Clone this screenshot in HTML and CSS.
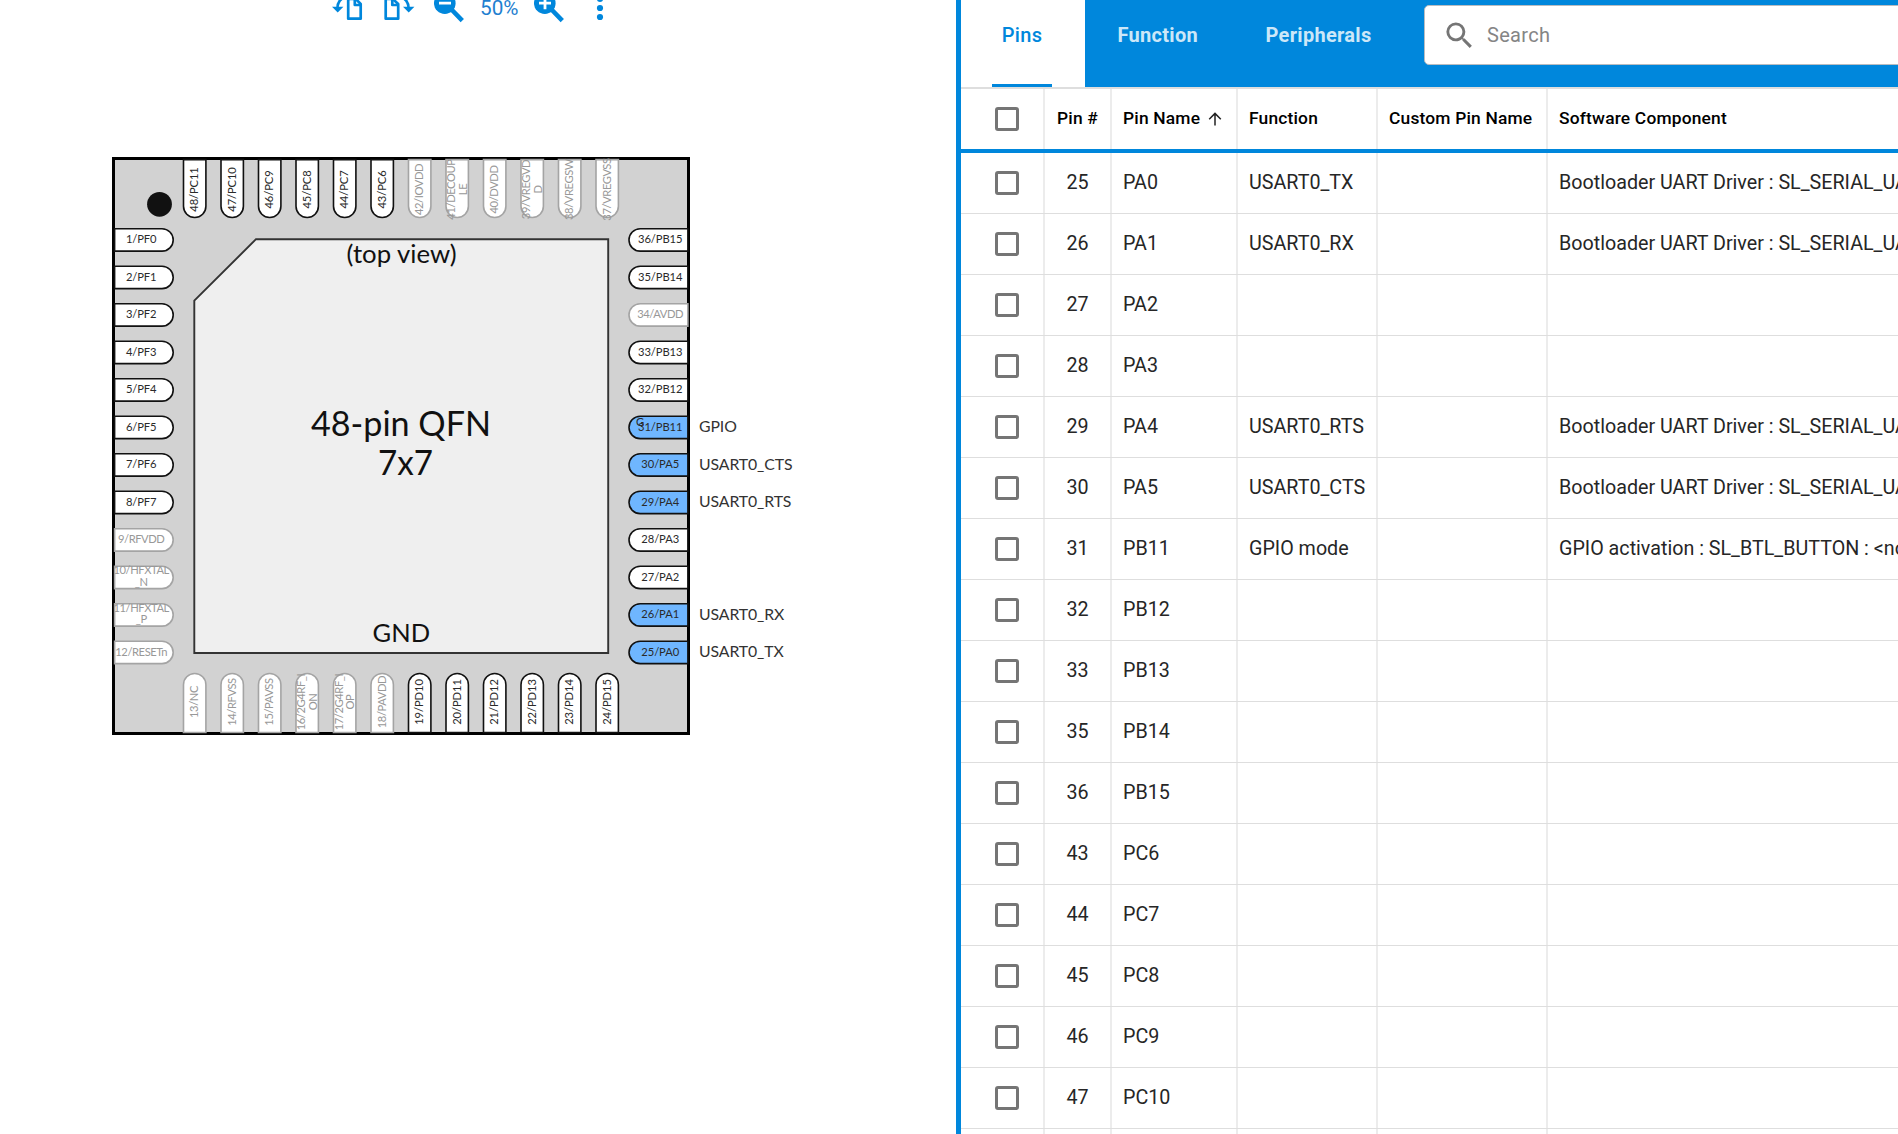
FILE: index.html
```html
<!DOCTYPE html>
<html lang="en">
<head>
<meta charset="utf-8">
<title>Pin Tool</title>
<link rel="stylesheet" href="styles.css">
</head>
<body>
<main class="app">
  <section class="canvas-pane">
    <div class="toolbar">
      <svg class="tool-icons" width="640" height="40" viewBox="0 0 640 40">
        <g class="tool-line">
          <path d="M349.2 -1H355.8L360.7 4V18.7H348.2V0"/>
          <path d="M354.8 -1V5H360.7"/>
          <path d="M337.5 8C337.5 3 340 -1 345 -3"/>
          <path d="M386.2 -1H392.8L398.2 4V18.7H385.7V0"/>
          <path d="M392.3 -1V5H398.2"/>
          <path d="M408.5 8C408.5 3 406 -1 401 -3"/>
        </g>
        <path class="tool-fill" d="M332 6.8H343.4L337.7 12.6ZM403 6.8H414.4L408.7 12.6Z"/>
        <g class="tool-fill">
          <circle cx="444.8" cy="3.2" r="10.8"/><circle cx="544.8" cy="3.2" r="10.8"/>
          <circle cx="600" cy="-1" r="3.1"/><circle cx="600" cy="8" r="3.1"/><circle cx="600" cy="17" r="3.1"/>
        </g>
        <path class="tool-handle" d="M451.5 9.5L462.3 20.6M551.5 9.5L562.3 20.6"/>
        <path class="tool-sign" d="M439 3.2H451M539 3.2H551M545 -3V9.2"/>
        <text class="zoom-level" x="480" y="14.5" textLength="38.5" lengthAdjust="spacingAndGlyphs">50%</text>
      </svg>
    </div>
    <svg class="chip" width="956" height="1094" viewBox="0 40 956 1094">
      <rect class="chip-body" x="113.5" y="158.5" width="575" height="575"/>
      <circle class="chip-dot" cx="159.5" cy="204.3" r="12.4"/>
      <path class="chip-pad" d="M194.3 300.7L256 239.2H608.2V653H194.3Z"/>
      <text class="chip-note" x="401.5" y="262.5" textLength="110" lengthAdjust="spacingAndGlyphs">(top view)</text>
      <text class="chip-title" x="401" y="435.5" textLength="180" lengthAdjust="spacingAndGlyphs">48-pin QFN</text>
      <text class="chip-title" x="405.5" y="474.5" textLength="55" lengthAdjust="spacingAndGlyphs">7x7</text>
      <text class="chip-note" x="401.3" y="641.5" textLength="57.5" lengthAdjust="spacingAndGlyphs">GND</text>
      <g id="pins"></g>
    </svg>
  </section>
  <section class="table-pane">
    <nav class="tabs">
      <div class="tab tab-active"><span>Pins</span></div>
      <div class="tab tab-function">Function</div>
      <div class="tab tab-peripherals">Peripherals</div>
      <div class="search">
        <svg width="35" height="35" viewBox="0 0 24 24"><path d="M15.5 14h-.79l-.28-.27A6.47 6.47 0 0 0 16 9.5 6.5 6.5 0 1 0 9.5 16c1.61 0 3.09-.59 4.23-1.57l.27.28v.79l5 4.99L20.49 19l-4.99-5zm-6 0C7.01 14 5 11.99 5 9.5S7.01 5 9.5 5 14 7.01 14 9.5 11.99 14 9.5 14z"/></svg>
        <span>Search</span>
      </div>
    </nav>
    <div class="row head">
      <div class="cell check"><i></i></div>
      <div class="cell num">Pin #</div>
      <div class="cell">Pin Name<svg class="sort" width="14" height="14" viewBox="0 0 14 14"><path d="M7 13.4V1.4M1.2 7.2L7 1.4L12.8 7.2"/></svg></div>
      <div class="cell">Function</div>
      <div class="cell">Custom Pin Name</div>
      <div class="cell">Software Component</div>
    </div>
    <div id="rows"></div>
  </section>
</main>
<script src="app.js"></script>
</body>
</html>
```
FILE: styles.css
```css
* { box-sizing: border-box; }
body {
  margin: 0;
  height: 1134px;
  overflow: hidden;
  background: #fff;
  font-family: Roboto, "Liberation Sans", sans-serif;
}
.app { display: flex; height: 1134px; }
.canvas-pane { width: 956px; flex: none; display: flex; flex-direction: column; }
.toolbar { height: 40px; }
.toolbar svg, .chip { display: block; }

.tool-line { fill: none; stroke: #0087dc; stroke-width: 2.7; stroke-linejoin: round; }
.tool-fill { fill: #0087dc; }
.tool-handle { stroke: #0087dc; stroke-width: 4.6; }
.tool-sign { stroke: #fff; stroke-width: 2.8; }
.zoom-level { font-size: 20px; fill: #1f7fd0; }

.chip { font-family: Lato, "Noto Sans", sans-serif; text-anchor: middle; }
.chip-body { fill: #d2d2d2; stroke: #000; stroke-width: 3; }
.chip-dot { fill: #111; }
.chip-pad { fill: #efefef; stroke: #333; stroke-width: 1.9; }
.chip-note { font-size: 25px; fill: #111; }
.chip-title { font-size: 34px; fill: #111; }
.pin path { fill: #fff; stroke: #111; stroke-width: 1.6; }
.pin text { font-size: 11.2px; letter-spacing: -.1px; fill: #2a2a2a; }
.pin.fixed path { stroke: #a4a4a4; }
.pin.fixed text { fill: #989898; letter-spacing: -.42px; }
.pin.used path { fill: #6fb6ff; }
.signal { font-size: 15.8px; letter-spacing: -.1px; fill: #333; text-anchor: start; }

.table-pane { flex: 1; min-width: 0; border-left: 5px solid #0087dc; overflow: hidden; }
.tabs {
  display: flex;
  height: 89px;
  background: #0087dc;
  border-bottom: 2px solid #dedede;
  font-size: 20px;
  font-weight: 700;
  letter-spacing: .3px;
  color: #cce7f8;
}
.tab { flex: none; height: 70px; line-height: 70px; white-space: nowrap; }
.tab-active { width: 124px; height: 87px; padding: 0 32px 0 31px; background: #fff; color: #0087dc; font-weight: 500; }
.tab-active span { display: block; width: 60px; height: 87px; border-bottom: 3px solid #0087dc; text-align: center; }
.tab-function { margin-left: 32.5px; width: 148px; }
.tab-peripherals { width: 158.5px; }
.search {
  display: flex;
  align-items: center;
  flex: none;
  width: 560px;
  height: 60px;
  margin-top: 5px;
  padding-left: 17px;
  background: #fff;
  border: 1px solid #b9bcc0;
  border-radius: 5px;
  font-size: 20px;
  font-weight: 400;
  color: #858585;
}
.search svg { fill: #757575; }
.search span { margin-left: 10px; }

.row {
  display: grid;
  grid-template-columns: 84px 67px 126px 140px 170px 350px;
  height: 61px;
  border-bottom: 1px solid #dedede;
  font-size: 19.7px;
  color: #262626;
}
.cell {
  display: flex;
  align-items: center;
  padding: 0 0 1px 11px;
  border-right: 2px solid #ececec;
  white-space: nowrap;
  overflow: hidden;
}
.cell:last-child { border-right: 0; }
.num { padding-left: 0; justify-content: center; }
.check { padding: 0 0 0 34px; }
.check i { width: 24px; height: 24px; border: 3px solid #757575; border-radius: 3px; }
.head { height: 64px; border-bottom: 4px solid #0087dc; font-size: 17.4px; letter-spacing: .18px; font-weight: 500; color: #000; }
.head .cell:not(.check) { padding-bottom: 2px; }
.sort { margin: 2px 0 0 8px; fill: none; stroke: #222; stroke-width: 1.5; }
```
FILE: app.js
```js
const left = ["1/PF0", "2/PF1", "3/PF2", "4/PF3", "5/PF4", "6/PF5", "7/PF6", "8/PF7", "9/RFVDD", "10/HFXTAL|_N", "11/HFXTAL|_P", "12/RESETn"];
const bottom = ["13/NC", "14/RFVSS", "15/PAVSS", "16/2G4RF_I|ON", "17/2G4RF_I|OP", "18/PAVDD", "19/PD10", "20/PD11", "21/PD12", "22/PD13", "23/PD14", "24/PD15"];
const right = ["36/PB15", "35/PB14", "34/AVDD", "33/PB13", "32/PB12", "31/PB11", "30/PA5", "29/PA4", "28/PA3", "27/PA2", "26/PA1", "25/PA0"];
const topPins = ["48/PC11", "47/PC10", "46/PC9", "45/PC8", "44/PC7", "43/PC6", "42/IOVDD", "41/DECOUP|LE", "40/DVDD", "39/VREGVD|D", "38/VREGSW", "37/VREGVSS"];
const signals = { "31": "GPIO", "30": "USART0_CTS", "29": "USART0_RTS", "26": "USART0_RX", "25": "USART0_TX" };
const PITCH = 37.5;
const R = 11.2;

function label(text, cx, cy, rotated) {
  const lines = text.split("|");
  const offsets = lines.length === 1 ? [3.6] : rotated ? [-2, 9.6] : [-3, 8.6];
  return lines.map((line, i) => rotated
    ? `<text transform="translate(${cx + offsets[i]} ${cy}) rotate(-90)">${line}</text>`
    : `<text x="${cx}" y="${cy + offsets[i]}">${line}</text>`
  ).join("");
}
function pin(name, shape, text) {
  const number = name.split("/")[0];
  const kind = !/\/P[A-F]\d/.test(name) ? "fixed" : signals[number] ? "used" : "";
  return `<g class="pin ${kind}"><path d="${shape}"/>${text}</g>`;
}

let out = "";
left.forEach((name, i) => {
  const y = 239.9 + i * PITCH;
  out += pin(name, `M114.6 ${y - R}H162A${R} ${R} 0 0 1 162 ${y + R}H114.6Z`, label(name, 141.2, y - .3, false));
});
right.forEach((name, i) => {
  const y = 239.9 + i * PITCH;
  const signal = signals[name.split("/")[0]];
  out += pin(name, `M687.9 ${y - R}H640.2A${R} ${R} 0 0 0 640.2 ${y + R}H687.9Z`, label(name, 660.2, y - .3, false));
  if (signal) out += `<text class="signal" x="699" y="${y + 5}">${signal}</text>`;
  if (signal === "GPIO") out += `<g class="pin"><text x="640" y="${y - 1}">G</text></g>`;
});
topPins.forEach((name, i) => {
  const x = 194.7 + i * PITCH;
  out += pin(name, `M${x - R} 159.6V206.3A${R} ${R} 0 0 0 ${x + R} 206.3V159.6Z`, label(name, x, 189.5, true));
});
bottom.forEach((name, i) => {
  const x = 194.7 + i * PITCH;
  out += pin(name, `M${x - R} 732.5V684.7A${R} ${R} 0 0 1 ${x + R} 684.7V732.5Z`, label(name, x, 702, true));
});
document.getElementById("pins").innerHTML = out;

const uart = "Bootloader UART Driver : SL_SERIAL_UART";
const rows = [
  [25, "PA0", "USART0_TX", uart], [26, "PA1", "USART0_RX", uart], [27, "PA2"], [28, "PA3"],
  [29, "PA4", "USART0_RTS", uart], [30, "PA5", "USART0_CTS", uart],
  [31, "PB11", "GPIO mode", "GPIO activation : SL_BTL_BUTTON : &lt;none&gt;"],
  [32, "PB12"], [33, "PB13"], [35, "PB14"], [36, "PB15"], [43, "PC6"], [44, "PC7"],
  [45, "PC8"], [46, "PC9"], [47, "PC10"], [48, "PC11"]
];
document.getElementById("rows").innerHTML = rows.map(([n, name, fn = "", component = ""]) =>
  `<div class="row"><div class="cell check"><i></i></div><div class="cell num">${n}</div><div class="cell">${name}</div><div class="cell">${fn}</div><div class="cell"></div><div class="cell">${component}</div></div>`
).join("");
```
